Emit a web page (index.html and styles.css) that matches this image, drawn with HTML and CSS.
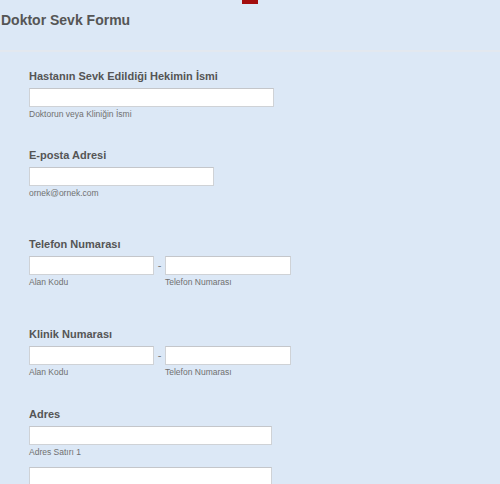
FILE: index.html
```html
<!DOCTYPE html>
<html lang="tr">
<head>
<meta charset="utf-8">
<title>Doktor Sevk Formu</title>
<link rel="stylesheet" href="styles.css">
</head>
<body>
<div class="page">
  <div class="tab"></div>
  <h1 class="title">Doktor Sevk Formu</h1>
  <div class="sep"></div>

  <div class="field f1">
    <div class="label">Hastanın Sevk Edildiği Hekimin İsmi</div>
    <input class="inp w-name" type="text">
    <div class="sub">Doktorun veya Kliniğin İsmi</div>
  </div>

  <div class="field f2">
    <div class="label">E-posta Adresi</div>
    <input class="inp w-mail" type="text">
    <div class="sub">ornek@ornek.com</div>
  </div>

  <div class="field f3">
    <div class="label">Telefon Numarası</div>
    <div class="phone">
      <div class="part">
        <input class="inp w-ph" type="text">
        <div class="sub">Alan Kodu</div>
      </div>
      <span class="dash">-</span>
      <div class="part">
        <input class="inp w-ph2" type="text">
        <div class="sub">Telefon Numarası</div>
      </div>
    </div>
  </div>

  <div class="field f4">
    <div class="label">Klinik Numarası</div>
    <div class="phone">
      <div class="part">
        <input class="inp w-ph" type="text">
        <div class="sub">Alan Kodu</div>
      </div>
      <span class="dash">-</span>
      <div class="part">
        <input class="inp w-ph2" type="text">
        <div class="sub">Telefon Numarası</div>
      </div>
    </div>
  </div>

  <div class="field f5">
    <div class="label">Adres</div>
    <input class="inp w-addr" type="text">
    <div class="sub">Adres Satırı 1</div>
    <input class="inp w-addr second" type="text">
  </div>
</div>
</body>
</html>
```

FILE: styles.css
```css
html, body {
  margin: 0;
  padding: 0;
}
body {
  background: #dce8f6;
  font-family: "Liberation Sans", Arial, sans-serif;
  color: #555;
  height: 484px;
  overflow: hidden;
}
.page {
  position: relative;
  padding-top: 12px;
}
.tab {
  position: absolute;
  left: 242px;
  top: 0;
  width: 16px;
  height: 4px;
  background: #a30d0d;
}
.title {
  margin: 0 0 0 1px;
  font-size: 14px;
  line-height: 17px;
  font-weight: bold;
  color: #555;
}
.sep {
  margin-top: 21px;
  height: 2px;
  background: #e3e8ef;
}
.field {
  padding-left: 29px;
}
.f1 { margin-top: 17px; }
.f2 { margin-top: 28px; }
.f3 { margin-top: 38px; }
.f4 { margin-top: 39px; }
.f5 { margin-top: 29px; }
.label {
  font-size: 11px;
  line-height: 14px;
  font-weight: bold;
  color: #555;
  margin-bottom: 5px;
}
.inp {
  display: block;
  box-sizing: border-box;
  height: 19px;
  margin: 0;
  padding: 0 3px;
  background: #fff;
  border: 1px solid #cfd2d6;
  border-top-color: #c4c6ca;
  border-radius: 0;
  outline: none;
}
.w-name { width: 245px; }
.w-mail { width: 185px; }
.w-ph { width: 125px; }
.w-ph2 { width: 126px; }
.w-addr { width: 243px; }
.second { margin-top: 9px; }
.sub {
  margin-top: 2px;
  font-size: 8.5px;
  line-height: 11px;
  color: #707070;
}
.phone {
  display: flex;
  align-items: flex-start;
}
.dash {
  width: 11px;
  text-align: center;
  font-size: 11px;
  line-height: 19px;
  color: #777;
}
```
